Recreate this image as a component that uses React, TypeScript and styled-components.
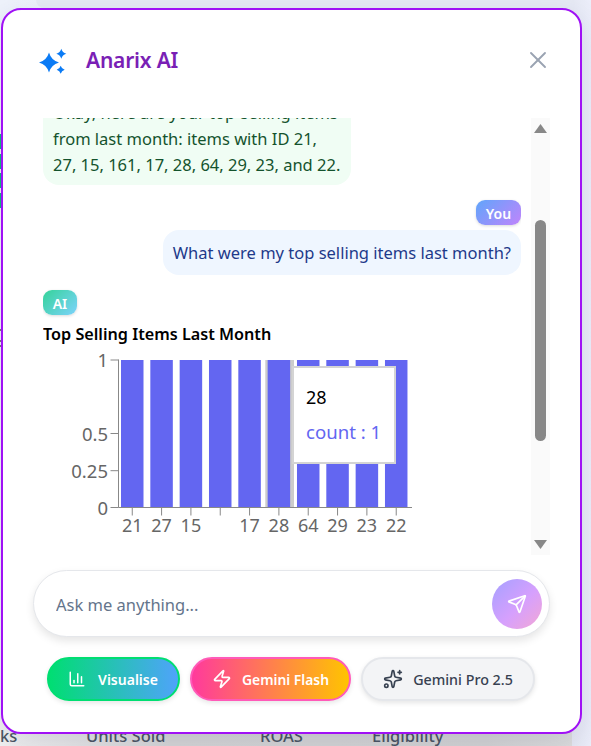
import styled, { createGlobalStyle } from "styled-components";
import { ChartColumn, Send, Sparkles, X, Zap } from "lucide-react";

const FONT = `"Noto Sans", "Open Sans", sans-serif`;

const GlobalStyle = createGlobalStyle`
  * { box-sizing: border-box; }
  html, body { margin: 0; padding: 0; }
  body { font-family: ${FONT}; background: #eef2fc; }
`;

const Page = styled.div`
  position: relative;
  width: 591px;
  height: 746px;
  overflow: hidden;
  display: flex;
  flex-direction: column;
  background: linear-gradient(90deg, #eef2fb 0%, #e6e9f4 97%, #eceefa 100%);
`;

const TopStrip = styled.div`
  height: 8px;
  flex: none;
  margin: 0 20px 0 36px;
  background: #e6eaf4;
  border-radius: 0 0 12px 12px;
`;

const SideMarks = styled.div`
  flex: 1;
  display: flex;
  flex-direction: column;
  padding-top: 126px;
`;

const SideMark = styled.span<{ $tone: "green" | "gray"; $gap: number }>`
  display: block;
  width: ${(p) => (p.$tone === "green" ? "2px" : "1px")};
  height: ${(p) => (p.$tone === "green" ? "15px" : "2px")};
  margin-bottom: ${(p) => p.$gap}px;
  background: ${(p) => (p.$tone === "green" ? "#10b981" : "#7a7a7a")};
`;

const TableHead = styled.div`
  height: 30px;
  width: 572px;
  flex: none;
  display: flex;
  padding-top: 5px;
  font-size: 16.5px;
  line-height: 30px;
  font-weight: 500;
  color: #4b5563;
  background: linear-gradient(90deg, #f2f2f2 0%, #d6d6d6 30%, #d4d4d4 85%, #dddddd 100%);
  overflow: hidden;
`;

const HeadCell = styled.span<{ $width: number }>`
  width: ${(p) => p.$width}px;
  flex: none;
  white-space: nowrap;
`;

const Modal = styled.div`
  position: absolute;
  left: 1px;
  top: 8px;
  width: 581px;
  height: 726px;
  display: flex;
  flex-direction: column;
  background: #ffffff;
  border: 2px solid #a011f5;
  border-radius: 20px;
  box-shadow: 0 10px 30px rgba(30, 41, 90, 0.12);
`;

const Header = styled.header`
  height: 108px;
  flex: none;
  display: flex;
  align-items: center;
  padding: 0 28px 8px 34px;
`;

const LogoMark = styled.svg`
  width: 30px;
  height: 30px;
  flex: none;
  fill: #0b7bf5;
`;

const Title = styled.h1`
  margin: 0 0 0 19px;
  font-size: 21px;
  font-weight: 600;
  letter-spacing: -0.2px;
  color: #7a1fb5;
`;

const CloseButton = styled.button`
  margin-left: auto;
  padding: 0;
  border: none;
  background: none;
  display: flex;
  color: #9aa3b2;
`;

const ChatArea = styled.div`
  height: 437px;
  flex: none;
  display: flex;
  margin-left: 40px;
  gap: 10px;
`;

const Messages = styled.div`
  width: 478px;
  height: 435px;
  flex: none;
  display: flex;
  flex-direction: column;
  overflow: hidden;
`;

const Bubble = styled.div<{ $from: "ai" | "user" }>`
  flex: none;
  align-self: ${(p) => (p.$from === "user" ? "flex-end" : "flex-start")};
  padding: ${(p) => (p.$from === "user" ? "10px 10px" : "9px 11px 7px 10px")};
  margin-top: ${(p) => (p.$from === "user" ? "5px" : "-27px")};
  border-radius: 16px;
  font-size: 16.5px;
  line-height: ${(p) => (p.$from === "user" ? "25px" : "26px")};
  white-space: nowrap;
  color: ${(p) => (p.$from === "user" ? "#1e3a8a" : "#14532d")};
  background: ${(p) => (p.$from === "user" ? "#eff6ff" : "#f0fdf4")};
`;

const Badge = styled.span<{ $from: "ai" | "user" }>`
  flex: none;
  height: 25px;
  display: flex;
  align-items: center;
  justify-content: center;
  align-self: ${(p) => (p.$from === "user" ? "flex-end" : "flex-start")};
  width: ${(p) => (p.$from === "user" ? "45px" : "34px")};
  margin-top: 15px;
  padding-top: 1px;
  border-radius: 9px;
  font-size: 14px;
  font-weight: 600;
  color: #ffffff;
  background: ${(p) =>
    p.$from === "user"
      ? "linear-gradient(135deg, #60a5fa, #c084fc)"
      : "linear-gradient(135deg, #34d399, #7dd3fc)"};
  box-shadow: 0 1px 3px rgba(0, 0, 0, 0.15);
`;

const ChartTitle = styled.div`
  margin-top: 8px;
  height: 22px;
  font-size: 16.2px;
  line-height: 22px;
  font-weight: 600;
  white-space: nowrap;
  color: #000000;
`;

const ChartWrap = styled.div`
  position: relative;
  width: 400px;
  height: 200px;
  margin-top: 5px;
  flex: none;
`;

const ChartSvg = styled.svg`
  display: block;
  font-family: ${FONT};
`;

const Tooltip = styled.div`
  position: absolute;
  left: 249px;
  top: 16px;
  width: 104px;
  height: 98px;
  padding: 17px 12px;
  background: #ffffff;
  border: 2px solid #d4d4d4;
  font-size: 18px;
  line-height: 25px;
`;

const TooltipLabel = styled.div`
  color: #000000;
  margin-bottom: 9px;
`;

const TooltipValue = styled.div`
  color: #6366f1;
  font-size: 18.6px;
  white-space: nowrap;
`;

const ScrollTrack = styled.div`
  width: 19px;
  height: 437px;
  flex: none;
  display: flex;
  flex-direction: column;
  align-items: center;
  background: #fafafa;
`;

const ScrollArrow = styled.span<{ $dir: "up" | "down" }>`
  flex: none;
  width: 13px;
  height: 9px;
  margin-top: ${(p) => (p.$dir === "up" ? "6px" : "99px")};
  background: #888888;
  clip-path: ${(p) =>
    p.$dir === "up"
      ? "polygon(50% 0, 100% 100%, 0 100%)"
      : "polygon(0 0, 100% 0, 50% 100%)"};
`;

const ScrollThumb = styled.span`
  flex: none;
  width: 11px;
  height: 221px;
  margin-top: 87px;
  border-radius: 6px;
  background: #888888;
`;

const Composer = styled.div`
  flex: none;
  width: 517px;
  height: 67px;
  margin: 15px 0 0 30px;
  display: flex;
  align-items: center;
  padding: 0 7px 0 22px;
  background: #ffffff;
  border: 1px solid #e5e7eb;
  border-radius: 34px;
  box-shadow: 0 4px 8px rgba(0, 0, 0, 0.1);
`;

const AskInput = styled.input`
  flex: 1;
  min-width: 0;
  border: none;
  outline: none;
  background: none;
  padding: 2px 0 0;
  font-family: ${FONT};
  font-size: 16.5px;
  color: #374151;

  &::placeholder {
    color: #64748b;
    opacity: 1;
  }
`;

const SendButton = styled.button`
  width: 50px;
  height: 50px;
  flex: none;
  border: none;
  border-radius: 50%;
  padding: 0;
  display: flex;
  align-items: center;
  justify-content: center;
  color: #ffffff;
  background: linear-gradient(135deg, #a5a0ff 0%, #d6a0fd 55%, #f3a7d4 100%);
`;

const Actions = styled.div`
  flex: none;
  display: flex;
  gap: 10px;
  margin: 20px 0 0 44px;
`;

const variants = {
  visual: `
    width: 133px;
    gap: 12px;
    padding-right: 1px;
    color: #ffffff;
    font-weight: 600;
    font-size: 14px;
    border-color: #00de72;
    background: linear-gradient(90deg, #00de72, #4fa3fb);
  `,
  flash: `
    width: 161px;
    color: #ffffff;
    font-weight: 600;
    font-size: 13.9px;
    border-color: #ff5ab8;
    background: linear-gradient(90deg, #ff3a9c, #ffc400);
  `,
  pro: `
    width: 174px;
    color: #374151;
    font-weight: 500;
    font-size: 14.3px;
    border-color: #e5e7eb;
    background: #f3f4f6;
  `,
};

const ActionButton = styled.button<{ $variant: keyof typeof variants }>`
  height: 44px;
  flex: none;
  display: flex;
  align-items: center;
  justify-content: center;
  gap: 10px;
  padding: 0;
  border: 2px solid;
  border-radius: 22px;
  font-family: ${FONT};
  box-shadow: 0 2px 5px rgba(0, 0, 0, 0.1);
  ${(p) => variants[p.$variant]}
`;

const bars = ["21", "27", "15", "161", "17", "28", "64", "29", "23", "22"];
const hidden = "161";

const CHART_LEFT = 78;
const STEP = 29.33;
const BAR_W = 22.5;
const TOP = 10;
const BOTTOM = 157.5;

const yTicks = [
  { label: "1", y: TOP },
  { label: "0.5", y: 83.5 },
  { label: "0.25", y: 120.7 },
  { label: "0", y: BOTTOM },
];

const star = (cx: number, cy: number, r: number) => {
  const c = r * 0.22;
  return `M${cx} ${cy - r}Q${cx + c} ${cy - c} ${cx + r} ${cy}Q${cx + c} ${cy + c} ${cx} ${cy + r}Q${cx - c} ${cy + c} ${cx - r} ${cy}Q${cx - c} ${cy - c} ${cx} ${cy - r}Z`;
};

const Chart = () => (
  <ChartWrap>
    <ChartSvg width={400} height={200}>
      <rect x={CHART_LEFT + 144.3} y={TOP} width={28.7} height={BOTTOM - TOP} fill="#cccccc" />
      {bars.map((id, i) => (
        <rect
          key={id}
          x={CHART_LEFT + i * STEP}
          y={TOP}
          width={BAR_W}
          height={BOTTOM - TOP}
          fill="#6366f1"
        />
      ))}
      <path
        d={`M75.5 ${TOP - 0.5}V${BOTTOM}H369`}
        fill="none"
        stroke="#888888"
        strokeWidth={1}
      />
      {yTicks.map((t) => (
        <g key={t.label}>
          <line x1={67.5} x2={75.5} y1={t.y} y2={t.y} stroke="#888888" />
          <text x={65} y={t.y + 7} textAnchor="end" fontSize={18.5} fill="#666666">
            {t.label}
          </text>
        </g>
      ))}
      {bars.map((id, i) => {
        const x = CHART_LEFT + i * STEP + BAR_W / 2;
        return (
          <g key={id}>
            <line x1={x} x2={x} y1={BOTTOM} y2={BOTTOM + 8} stroke="#888888" />
            {id !== hidden && (
              <text x={x} y={182} textAnchor="middle" fontSize={18} fill="#666666">
                {id}
              </text>
            )}
          </g>
        );
      })}
    </ChartSvg>
    <Tooltip>
      <TooltipLabel>28</TooltipLabel>
      <TooltipValue>count : 1</TooltipValue>
    </Tooltip>
  </ChartWrap>
);

export default function App() {
  return (
    <Page>
      <GlobalStyle />
      <TopStrip />
      <SideMarks>
        <SideMark $tone="green" $gap={4.6} />
        <SideMark $tone="green" $gap={4.6} />
        <SideMark $tone="green" $gap={4.6} />
        <SideMark $tone="green" $gap={121} />
        <SideMark $tone="gray" $gap={9} />
        <SideMark $tone="gray" $gap={3} />
        <SideMark $tone="gray" $gap={0} />
      </SideMarks>
      <TableHead>
        <HeadCell $width={86}>ks</HeadCell>
        <HeadCell $width={174}>Units Sold</HeadCell>
        <HeadCell $width={112}>ROAS</HeadCell>
        <HeadCell $width={100}>Eligibility</HeadCell>
      </TableHead>

      <Modal>
        <Header>
          <LogoMark viewBox="0 0 30 30">
            <path d={star(12, 17.5, 10)} />
            <path d={star(24.3, 8.7, 5)} />
            <path d={star(23.7, 24.7, 4)} />
          </LogoMark>
          <Title>Anarix AI</Title>
          <CloseButton aria-label="Close">
            <X size={28} strokeWidth={1.6} />
          </CloseButton>
        </Header>

        <ChatArea>
          <Messages>
            <Bubble $from="ai">
              Okay, here are your top-selling items
              <br />
              from last month: items with ID 21,
              <br />
              27, 15, 161, 17, 28, 64, 29, 23, and 22.
            </Bubble>
            <Badge $from="user">You</Badge>
            <Bubble $from="user">What were my top selling items last month?</Bubble>
            <Badge $from="ai">AI</Badge>
            <ChartTitle>Top Selling Items Last Month</ChartTitle>
            <Chart />
          </Messages>
          <ScrollTrack>
            <ScrollArrow $dir="up" />
            <ScrollThumb />
            <ScrollArrow $dir="down" />
          </ScrollTrack>
        </ChatArea>

        <Composer>
          <AskInput placeholder="Ask me anything..." />
          <SendButton aria-label="Send">
            <Send size={20} strokeWidth={2} />
          </SendButton>
        </Composer>

        <Actions>
          <ActionButton $variant="visual">
            <ChartColumn size={18} />
            Visualise
          </ActionButton>
          <ActionButton $variant="flash">
            <Zap size={20} />
            Gemini Flash
          </ActionButton>
          <ActionButton $variant="pro">
            <Sparkles size={20} />
            Gemini Pro 2.5
          </ActionButton>
        </Actions>
      </Modal>
    </Page>
  );
}
